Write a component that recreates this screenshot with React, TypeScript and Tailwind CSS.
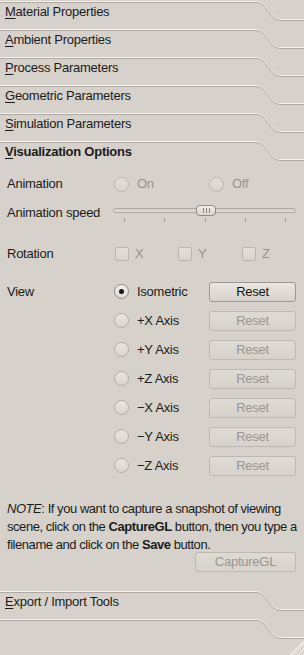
import React from "react";

const F = "font-['Liberation_Sans',Arial,sans-serif]";

function TabShape() {
  return (
    <svg className="absolute left-0 top-0" width="304" height="28" viewBox="0 0 304 28">
      <path d="M0 1.5 H255 C262 1.5 265 6 269 11.5 C273 17 275 19.5 282 19.5 H304" fill="none" stroke="#f4f2ee" strokeWidth="1" />
      <path d="M0 2.5 H255 C262 2.5 265 7 269 12.5 C273 18 275 20.5 282 20.5 H304" fill="none" stroke="#aeaaa3" strokeWidth="1" />
    </svg>
  );
}

function Header({ title, bold }: { title?: string; bold?: boolean }) {
  return (
    <div className="relative h-[28px]">
      <TabShape />
      {title ? (
        <div
          className={`relative pl-[5px] pt-[4px] leading-[16px] text-[13px] tracking-[-0.25px] text-[#1b1b1b] ${bold ? "font-bold" : ""}`}
        >
          <span className="underline decoration-1 underline-offset-[2px]">{title[0]}</span>
          {title.slice(1)}
        </div>
      ) : null}
    </div>
  );
}

function Radio({ checked, disabled }: { checked?: boolean; disabled?: boolean }) {
  return (
    <div
      className={`flex h-[15px] w-[15px] shrink-0 items-center justify-center rounded-full border bg-gradient-to-b ${
        disabled
          ? "border-[#bcb8b1] from-[#e2dfda] to-[#d8d4ce]"
          : checked
          ? "border-[#8e8a83] from-[#f2f0ec] to-[#dedad4]"
          : "border-[#b1ada6] from-[#e8e5e0] to-[#d9d5cf]"
      }`}
    >
      {checked ? <div className="h-[5px] w-[5px] rounded-full bg-[#151515]" /> : null}
    </div>
  );
}

function Checkbox() {
  return (
    <div className="ml-[1px] h-[14px] w-[14px] shrink-0 rounded-[2px] border border-[#bab6af] bg-gradient-to-b from-[#e2dfda] to-[#d8d4ce]" />
  );
}

function Button({ label, disabled, w }: { label: string; disabled?: boolean; w: string }) {
  return (
    <div
      className={`${w} flex h-[20px] items-center justify-center rounded-[3px] border bg-gradient-to-b text-[13px] tracking-[-0.25px] ${
        disabled
          ? "border-[#bdb9b2] from-[#dedbd5] to-[#d6d2cb] text-[#9a968f]"
          : "border-[#9d9992] from-[#e9e6e1] to-[#d6d2cb] text-[#161616]"
      }`}
    >
      {label}
    </div>
  );
}

const views = ["Isometric", "+X Axis", "+Y Axis", "+Z Axis", "\u2212X Axis", "\u2212Y Axis", "\u2212Z Axis"];

export default function App() {
  return (
    <div className={`${F} relative h-[655px] w-[304px] overflow-hidden bg-[#d6d2cb] text-[13px] text-[#1b1b1b]`}>
      <Header title="Material Properties" />
      <Header title="Ambient Properties" />
      <Header title="Process Parameters" />
      <Header title="Geometric Parameters" />
      <Header title="Simulation Parameters" />
      <Header title="Visualization Options" bold />

      <div className="h-[416px] pl-[7px] tracking-[-0.25px]">
        {/* Animation */}
        <div className="mt-[6px] flex h-[20px] items-center">
          <div className="w-[107px]">Animation</div>
          <div className="flex w-[95px] items-center">
            <Radio disabled />
            <span className="ml-[8px] text-[#97938c]">On</span>
          </div>
          <div className="flex items-center">
            <Radio disabled />
            <span className="ml-[8px] text-[#97938c]">Off</span>
          </div>
        </div>

        {/* Animation speed */}
        <div className="mt-[8px] flex h-[22px] items-center">
          <div className="w-[106px]">Animation speed</div>
          <div className="relative h-[22px] w-[183px]">
            <div className="absolute left-0 right-0 top-[6px] h-[5px] rounded-full border border-[#aeaaa3] bg-gradient-to-b from-[#cfcbc4] to-[#e4e1dc]" />
            <div className="absolute left-[83px] top-[3px] flex h-[11px] w-[20px] items-center justify-center gap-[2px] rounded-[4px] border border-[#8f8b84] bg-gradient-to-b from-[#f1efeb] to-[#d9d5ce]">
              <div className="h-[5px] w-[1px] bg-[#8a867f]" />
              <div className="h-[5px] w-[1px] bg-[#8a867f]" />
              <div className="h-[5px] w-[1px] bg-[#8a867f]" />
            </div>
            <div className="absolute left-[11px] top-[16px] h-[4px] w-[1px] bg-[#a29e97]" />
            <div className="absolute left-[51px] top-[16px] h-[4px] w-[1px] bg-[#a29e97]" />
            <div className="absolute left-[92px] top-[16px] h-[4px] w-[1px] bg-[#a29e97]" />
            <div className="absolute left-[132px] top-[16px] h-[4px] w-[1px] bg-[#a29e97]" />
            <div className="absolute left-[172px] top-[16px] h-[4px] w-[1px] bg-[#a29e97]" />
          </div>
        </div>

        {/* Rotation */}
        <div className="mt-[20px] flex h-[20px] items-center">
          <div className="w-[107px]">Rotation</div>
          <div className="flex w-[63px] items-center">
            <Checkbox />
            <span className="ml-[6px] text-[#97938c]">X</span>
          </div>
          <div className="flex w-[64px] items-center">
            <Checkbox />
            <span className="ml-[6px] text-[#97938c]">Y</span>
          </div>
          <div className="flex items-center">
            <Checkbox />
            <span className="ml-[6px] text-[#97938c]">Z</span>
          </div>
        </div>

        {/* View */}
        <div className="mt-[13px] flex flex-col">
          {views.map((v, i) => (
            <div key={v} className="flex h-[29px] items-center">
              <div className="w-[107px]">{i === 0 ? "View" : ""}</div>
              <div className="flex w-[95px] items-center">
                <Radio checked={i === 0} />
                <span className="ml-[8px]">{v}</span>
              </div>
              <Button label="Reset" disabled={i !== 0} w="w-[87px]" />
            </div>
          ))}
        </div>

        {/* Note */}
        <p className="mt-[20px] whitespace-nowrap leading-[18px] tracking-[-0.45px]">
          <i>NOTE</i>: If you want to capture a snapshot of viewing
          <br />
          scene, click on the <b>CaptureGL</b> button, then you type a
          <br />
          filename and click on the <b>Save</b> button.
        </p>
        <div className="mt-[-2px] flex justify-end pr-[8px]">
          <Button label="CaptureGL" disabled w="w-[101px]" />
        </div>
      </div>

      <Header title="Export / Import Tools" />
      <Header />

      <svg className="absolute bottom-0 right-0" width="15" height="15" viewBox="0 0 15 15">
        <polygon points="15,1 15,15 1,15" fill="#e3e0da" />
        <line x1="1" y1="15" x2="15" y2="1" stroke="#f3f1ed" strokeWidth="1" />
        <line x1="6" y1="15" x2="15" y2="6" stroke="#c9c5be" strokeWidth="1" />
        <line x1="11" y1="15" x2="15" y2="11" stroke="#c9c5be" strokeWidth="1" />
      </svg>
    </div>
  );
}
